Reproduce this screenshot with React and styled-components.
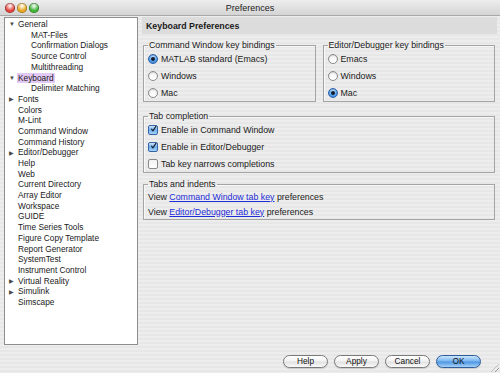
import styled, { createGlobalStyle } from "styled-components";

const GlobalStyle = createGlobalStyle`
  html, body {
    margin: 0;
    padding: 0;
    background: #ececec;
  }
  body {
    font-family: "Liberation Sans", Arial, sans-serif;
  }
`;

const treeItems = [
  { label: "General", open: true },
  { label: "MAT-Files", child: true },
  { label: "Confirmation Dialogs", child: true },
  { label: "Source Control", child: true },
  { label: "Multithreading", child: true },
  { label: "Keyboard", open: true, selected: true },
  { label: "Delimiter Matching", child: true },
  { label: "Fonts", closed: true },
  { label: "Colors" },
  { label: "M-Lint" },
  { label: "Command Window" },
  { label: "Command History" },
  { label: "Editor/Debugger", closed: true },
  { label: "Help" },
  { label: "Web" },
  { label: "Current Directory" },
  { label: "Array Editor" },
  { label: "Workspace" },
  { label: "GUIDE" },
  { label: "Time Series Tools" },
  { label: "Figure Copy Template" },
  { label: "Report Generator" },
  { label: "SystemTest" },
  { label: "Instrument Control" },
  { label: "Virtual Reality", closed: true },
  { label: "Simulink", closed: true },
  { label: "Simscape" },
];

export default function App() {
  return (
    <Window>
      <GlobalStyle />
      <TitleBar>
        <Lights>
          <Light color="#e0443e" />
          <Light color="#e8a824" />
          <Light color="#3fb337" />
        </Lights>
        <Title>Preferences</Title>
      </TitleBar>

      <Body>
        <Tree>
          {treeItems.map((item) => (
            <TreeRow key={item.label} child={item.child}>
              <Arrow>{item.open ? "▼" : item.closed ? "▶" : ""}</Arrow>
              <TreeLabel selected={item.selected}>{item.label}</TreeLabel>
            </TreeRow>
          ))}
        </Tree>

        <Panel>
          <PanelHeader>Keyboard Preferences</PanelHeader>
          <Content>
            <GroupRow>
              <Group>
                <Legend>Command Window key bindings</Legend>
                <Option>
                  <Radio checked />
                  MATLAB standard (Emacs)
                </Option>
                <Option>
                  <Radio />
                  Windows
                </Option>
                <Option>
                  <Radio />
                  Mac
                </Option>
              </Group>
              <Group>
                <Legend>Editor/Debugger key bindings</Legend>
                <Option>
                  <Radio />
                  Emacs
                </Option>
                <Option>
                  <Radio />
                  Windows
                </Option>
                <Option>
                  <Radio checked />
                  Mac
                </Option>
              </Group>
            </GroupRow>

            <Group top="3px">
              <Legend>Tab completion</Legend>
              <Option>
                <Check checked />
                Enable in Command Window
              </Option>
              <Option>
                <Check checked />
                Enable in Editor/Debugger
              </Option>
              <Option>
                <Check />
                Tab key narrows completions
              </Option>
            </Group>

            <Group>
              <Legend>Tabs and indents</Legend>
              <LinkRow>
                View <Link>Command Window tab key</Link> preferences
              </LinkRow>
              <LinkRow>
                View <Link>Editor/Debugger tab key</Link> preferences
              </LinkRow>
            </Group>
          </Content>
        </Panel>
      </Body>

      <Footer>
        <Button>Help</Button>
        <Button>Apply</Button>
        <Button>Cancel</Button>
        <Button primary>OK</Button>
        <Grip />
      </Footer>
    </Window>
  );
}

function Radio({ checked }) {
  return (
    <RadioBox checked={checked}>{checked ? <RadioDot /> : null}</RadioBox>
  );
}

function Check({ checked }) {
  return (
    <CheckBox checked={checked}>
      {checked ? (
        <svg width="10" height="10" viewBox="0 0 10 10">
          <path
            d="M2.2 5.2 L4.2 7.6 L8.4 1.2"
            fill="none"
            stroke="#1a1a2a"
            strokeWidth="1.6"
            strokeLinecap="round"
          />
        </svg>
      ) : null}
    </CheckBox>
  );
}

const Window = styled.div`
  position: relative;
  width: 500px;
  height: 373px;
  overflow: hidden;
  display: flex;
  flex-direction: column;
  background: repeating-linear-gradient(
    180deg,
    #ededed 0px,
    #ededed 2px,
    #e7e7e7 2px,
    #e7e7e7 4px
  );
  font-size: 8.3px;
  color: #1a1a1a;
`;

const TitleBar = styled.div`
  height: 15px;
  flex-shrink: 0;
  display: flex;
  align-items: center;
  position: relative;
  background: linear-gradient(#eeeeee, #d4d4d4);
  border-bottom: 1px solid #a8a8a8;
`;

const Lights = styled.div`
  display: flex;
  gap: 2px;
  padding-left: 5px;
`;

const Light = styled.div`
  width: 10px;
  height: 10px;
  border-radius: 50%;
  background: radial-gradient(
    circle at 50% 30%,
    #ffffff 0%,
    ${(p) => p.color} 55%,
    ${(p) => p.color} 100%
  );
  box-shadow: inset 0 0 0 0.5px rgba(0, 0, 0, 0.45);
`;

const Title = styled.div`
  position: absolute;
  left: 0;
  right: 0;
  text-align: center;
  font-size: 9px;
  color: #222;
`;

const Body = styled.div`
  display: flex;
  gap: 4px;
  padding: 1px 3px 0 4px;
  height: 328px;
  flex-shrink: 0;
`;

const Tree = styled.div`
  width: 132px;
  flex-shrink: 0;
  background: #ffffff;
  border: 1px solid #8e8e8e;
  padding-top: 1px;
  box-sizing: content-box;
  height: 325px;
`;

const TreeRow = styled.div`
  height: 10.7px;
  display: flex;
  align-items: center;
  padding-left: ${(p) => (p.child ? "17px" : "4px")};
`;

const Arrow = styled.span`
  width: 8px;
  font-size: 6px;
  color: #4a4a4a;
  line-height: 1;
`;

const TreeLabel = styled.span`
  padding: 0 1px;
  line-height: 10.5px;
  background: ${(p) => (p.selected ? "#e2c8f4" : "transparent")};
`;

const Panel = styled.div`
  flex: 1;
  display: flex;
  flex-direction: column;
`;

const PanelHeader = styled.div`
  height: 17px;
  background: #dcdcdc;
  display: flex;
  align-items: center;
  padding-left: 4px;
  font-weight: bold;
  font-size: 8.8px;
`;

const Content = styled.div`
  display: flex;
  flex-direction: column;
  gap: 6px;
  padding: 6px 2px 0 1px;
  font-size: 8.8px;
`;

const GroupRow = styled.div`
  display: flex;
  gap: 7px;
`;

const Group = styled.fieldset`
  flex: 1;
  margin: 0;
  margin-top: ${(p) => p.top || "0"};
  min-width: 0;
  padding: 0 4px 0 4px;
  border: 1px solid #a4a4a4;
  box-shadow: inset 1px 1px 0 #f8f8f8;
`;

const Legend = styled.legend`
  padding: 0 1px;
  font-size: 8.8px;
  line-height: 10px;
  color: #1a1a1a;
`;

const Option = styled.div`
  height: 17px;
  display: flex;
  align-items: center;
  gap: 3px;
`;

const RadioBox = styled.span`
  width: 10px;
  height: 10px;
  border-radius: 50%;
  box-sizing: border-box;
  display: inline-flex;
  align-items: center;
  justify-content: center;
  border: 1px solid ${(p) => (p.checked ? "#2a5da8" : "#8a8a8a")};
  background: ${(p) =>
    p.checked
      ? "radial-gradient(circle at 50% 30%, #d5ecff 0%, #5aa6ef 55%, #2e7ad8 100%)"
      : "linear-gradient(#f4f4f4, #ffffff)"};
  box-shadow: inset 0 1px 1px rgba(0, 0, 0, 0.15);
`;

const RadioDot = styled.span`
  width: 4px;
  height: 4px;
  border-radius: 50%;
  background: #0f1a30;
`;

const CheckBox = styled.span`
  width: 10px;
  height: 10px;
  border-radius: 2px;
  box-sizing: border-box;
  display: inline-flex;
  align-items: center;
  justify-content: center;
  border: 1px solid ${(p) => (p.checked ? "#3565a8" : "#8a8a8a")};
  background: ${(p) =>
    p.checked
      ? "linear-gradient(#cfe6fb, #6aaef0 50%, #a9d3f8)"
      : "linear-gradient(#f2f2f2, #ffffff)"};
  svg {
    margin-top: -2px;
    margin-left: 1px;
  }
`;

const LinkRow = styled.div`
  height: 15px;
  display: flex;
  align-items: center;
  white-space: pre;
`;

const Link = styled.span`
  color: #1e2cd8;
  text-decoration: underline;
`;

const Footer = styled.div`
  flex: 1;
  display: flex;
  justify-content: flex-end;
  align-items: center;
  gap: 6px;
  padding: 4px 19px 0 0;
  position: relative;
`;

const Button = styled.button`
  width: 45px;
  height: 13px;
  padding: 0;
  border-radius: 7px;
  font-family: "Liberation Sans", Arial, sans-serif;
  font-size: 8.3px;
  color: #111;
  border: 1px solid ${(p) => (p.primary ? "#2f5d9c" : "#7a7a7a")};
  background: ${(p) =>
    p.primary
      ? "linear-gradient(#cbe5fb 0%, #79b6ef 45%, #4f97e3 55%, #a6d2f8 100%)"
      : "linear-gradient(#ffffff 0%, #f2f2f2 45%, #e2e2e2 55%, #fafafa 100%)"};
  box-shadow: 0 1px 1px rgba(0, 0, 0, 0.15);
`;

const Grip = styled.div`
  position: absolute;
  right: 1px;
  bottom: 1px;
  width: 8px;
  height: 8px;
  background: repeating-linear-gradient(
    135deg,
    transparent 0px,
    transparent 2px,
    #9a9a9a 2px,
    #9a9a9a 3px
  );
  clip-path: polygon(100% 0, 100% 100%, 0 100%);
`;
